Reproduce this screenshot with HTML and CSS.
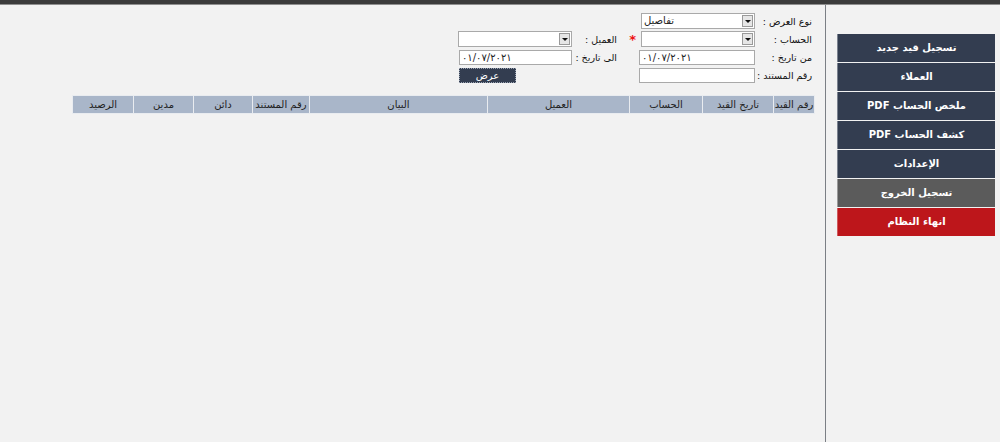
FILE: index.html
```html
<!DOCTYPE html>
<html lang="ar" dir="rtl">

<head>
  <meta charset="UTF-8">
  <meta name="viewport" content="width=device-width, initial-scale=1.0">
  <title>دفتر القيود</title>
  <link rel="stylesheet" href="styles.css">
</head>

<body>

  <div class="topbar"></div>

  <div class="layout">
    <!-- Side menu -->
    <aside class="sidebar">
      <a class="menu-btn" href="#">تسجيل قيد جديد</a>
      <a class="menu-btn" href="#">العملاء</a>
      <a class="menu-btn" href="#">ملخص الحساب PDF</a>
      <a class="menu-btn" href="#">كشف الحساب PDF</a>
      <a class="menu-btn" href="#">الإعدادات</a>
      <a class="menu-btn logout" href="#">تسجيل الخروج</a>
      <a class="menu-btn shutdown" href="#">انهاء النظام</a>
    </aside>

    <main class="content">
      <!-- Filters -->
      <form class="filters">
        <label class="f-label c1">نوع العرض :</label>
        <div class="select c2"><span class="value">تفاصيل</span><span class="arrow"></span></div>

        <label class="f-label c1">الحساب :</label>
        <div class="select c2"><span class="value"></span><span class="arrow"></span></div>
        <span class="required c3">*</span>
        <label class="f-label c4">العميل :</label>
        <div class="select c5"><span class="value"></span><span class="arrow"></span></div>

        <label class="f-label c1">من تاريخ :</label>
        <input class="textbox c2" type="text" value="٠١/٠٧/٢٠٢١">
        <label class="f-label c4">الى تاريخ :</label>
        <input class="textbox c5" type="text" value="٠١/٠٧/٢٠٢١">

        <label class="f-label c1">رقم المستند :</label>
        <input class="textbox c2" type="text">
        <button class="show-btn c5" type="button">عرض</button>
      </form>

      <!-- Entries -->
      <table class="entries">
        <colgroup>
          <col style="width: 41px">
          <col style="width: 71px">
          <col style="width: 73px">
          <col style="width: 142px">
          <col style="width: 178px">
          <col style="width: 57px">
          <col style="width: 59px">
          <col style="width: 60px">
          <col style="width: 61px">
        </colgroup>
        <thead>
          <tr>
            <th>رقم القيد</th>
            <th>تاريخ القيد</th>
            <th>الحساب</th>
            <th>العميل</th>
            <th>البيان</th>
            <th>رقم المستند</th>
            <th>دائن</th>
            <th>مدين</th>
            <th>الرصيد</th>
          </tr>
        </thead>
        <tbody></tbody>
      </table>
    </main>
  </div>

</body>

</html>
```

FILE: styles.css
```css
/* Global Styles */
html,
body {
  height: 100%;
}

body {
  margin: 0;
  background-color: #f2f2f2;
  font-family: Tahoma, "DejaVu Sans", sans-serif;
  font-size: 10px;
  color: #222;
  overflow: hidden;
}

.topbar {
  height: 4px;
  background-color: #3c3c3c;
  border-bottom: 1px solid #8f8f8f;
}

.layout {
  display: flex;
  height: calc(100% - 5px);
}

/* Side menu */
.sidebar {
  width: 158px;
  padding: 29px 5px 0 11px;
  border-left: 1px solid #7b7f85;
  display: flex;
  flex-direction: column;
  gap: 1px;
}

.menu-btn {
  height: 28px;
  line-height: 28px;
  text-align: center;
  color: #fff;
  font-weight: bold;
  text-decoration: none;
  background-color: #333d50;
  border-left: 1px solid #7c8390;
  box-sizing: border-box;
}

.menu-btn.logout {
  background-color: #5b5b5b;
  border-left-color: #9a9a9a;
}

.menu-btn.shutdown {
  background-color: #bd161b;
  border-left-color: #d05a5d;
}

/* Main area */
.content {
  flex: 1;
  padding: 9px 10px 0 0;
}

.filters {
  display: grid;
  grid-template-columns: 60px 116px 22px 45px 113px;
  grid-auto-rows: 15px;
  row-gap: 3px;
}

.c1 { grid-column: 1; }
.c2 { grid-column: 2; }
.c3 { grid-column: 3; }
.c4 { grid-column: 4; }
.c5 { grid-column: 5; }

.f-label {
  padding-right: 3px;
  font-size: 9.5px;
  line-height: 15px;
  white-space: nowrap;
  color: #111;
}

.f-label.c4 {
  padding-right: 0;
}

.required {
  color: #e11;
  font-weight: bold;
  font-size: 13px;
  line-height: 15px;
  padding-right: 3px;
}

.select,
.textbox {
  direction: ltr;
  box-sizing: border-box;
  height: 15px;
  background-color: #fff;
  border: 1px solid #a9a9a9;
  font-family: inherit;
  font-size: 10px;
  color: #222;
}

.select {
  display: flex;
  align-items: center;
  width: 114px;
  margin-top: -1px;
  height: 16px;
}

.select .value {
  flex: 1;
  padding-left: 2px;
  line-height: 14px;
}

.select .arrow {
  width: 11px;
  height: 12px;
  margin-right: 1px;
  background-color: #e6e6e6;
  border: 1px solid #9a9a9a;
  box-sizing: border-box;
  position: relative;
}

.select .arrow::after {
  content: "";
  position: absolute;
  left: 2px;
  top: 4px;
  border-left: 3px solid transparent;
  border-right: 3px solid transparent;
  border-top: 3px solid #111;
}

.textbox {
  width: 116px;
  padding: 0 2px;
  margin: 0;
  text-align: left;
}

.textbox.c5 {
  width: 113px;
}

.show-btn {
  justify-self: end;
  width: 57px;
  height: 15px;
  padding: 0;
  background-color: #333d50;
  color: #fff;
  border: 1px dotted #9aa3b2;
  font-family: inherit;
  font-size: 10px;
  line-height: 12px;
}

/* Entries table */
.entries {
  margin-top: 12px;
  width: 742px;
  border-collapse: collapse;
  table-layout: fixed;
}

.entries th {
  height: 17px;
  padding: 0;
  background-color: #a9b6c9;
  border: 1px solid #e9ecf0;
  font-weight: normal;
  text-align: center;
  white-space: nowrap;
  overflow: hidden;
}
```
